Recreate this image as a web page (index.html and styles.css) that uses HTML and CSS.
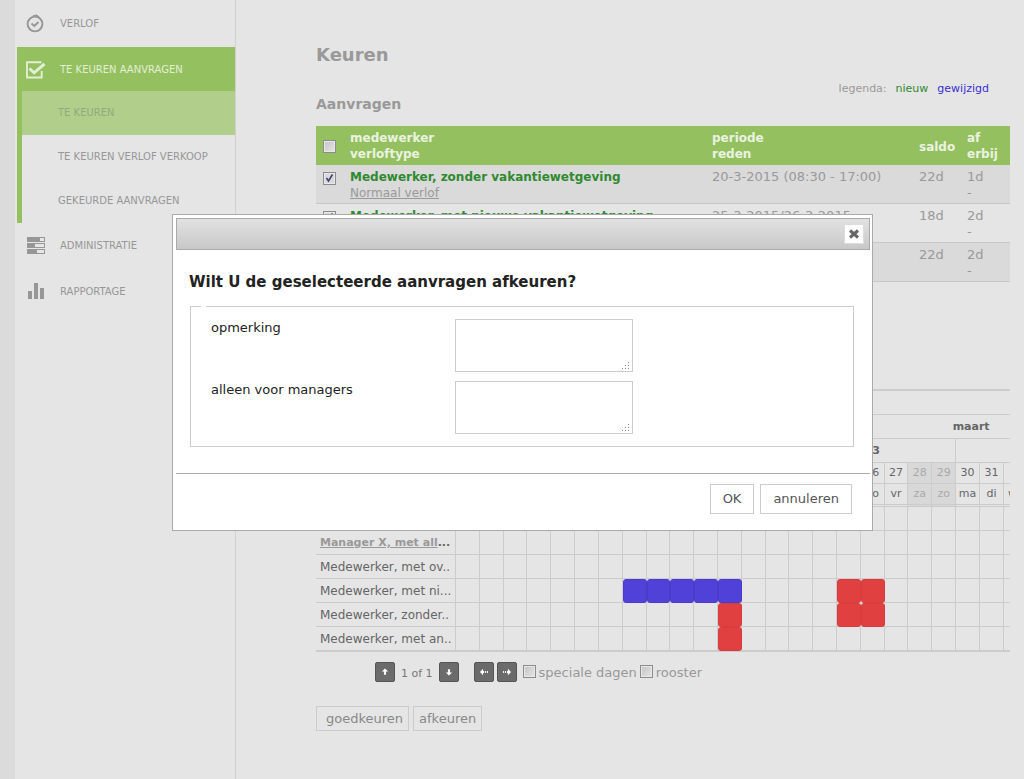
FILE: index.html
```html
<!DOCTYPE html>
<html lang="nl">
<head>
<meta charset="utf-8">
<title>Keuren</title>
<link rel="stylesheet" href="styles.css">
</head>
<body>
<div class="page">
  <nav class="sidebar">
    <a class="item" href="#">
      <svg class="icon" viewBox="0 0 20 20"><circle cx="9" cy="10" r="7.400" fill="none" stroke="currentColor" stroke-width="1.900"/><path d="M7 2.200l3.500-.700 2.500 2" fill="none" stroke="currentColor" stroke-width="2"/><path d="M5.500 9.500l2.800 2.500 4.200-4" fill="none" stroke="currentColor" stroke-width="2"/></svg>
      VERLOF</a>
    <div class="group">
      <a class="item active" href="#">
        <svg class="icon" viewBox="0 0 20 20"><path d="M15.500 2.200H1v15.300h14.700V11" fill="none" stroke="currentColor" stroke-width="1.900"/><path d="M3.500 8.500l4.500 4.300L18.500 4" fill="none" stroke="currentColor" stroke-width="3"/></svg>
        TE KEUREN AANVRAGEN</a>
      <a class="sub current" href="#">TE KEUREN</a>
      <a class="sub" href="#">TE KEUREN VERLOF VERKOOP</a>
      <a class="sub" href="#">GEKEURDE AANVRAGEN</a>
    </div>
    <a class="item" href="#">
      <svg class="icon" viewBox="0 0 20 20"><path d="M1 1h18v5H1zM1 7h18v5H1zM1 13h18v5H1z" fill="currentColor"/><path d="M14 2h4v3h-4zM9 8h9v3H9zM11 14h7v3h-7z" fill="#e5e5e5"/></svg>
      ADMINISTRATIE</a>
    <a class="item" href="#">
      <svg class="icon" viewBox="0 0 20 20"><path d="M2 9h4v8H2zM8 1h4v16H8zM14 6h4v11h-4z" fill="currentColor"/></svg>
      RAPPORTAGE</a>
  </nav>

  <main class="main">
    <h1>Keuren</h1>
    <p class="legend">legenda:<span class="new">nieuw</span><span class="changed">gewijzigd</span></p>
    <h2>Aanvragen</h2>
    <table class="requests">
      <colgroup><col class="c-check"><col><col class="c-period"><col class="c-saldo"><col class="c-off"></colgroup>
      <thead>
        <tr><th class="mid"><input type="checkbox" aria-label="alles"></th><th>medewerker<br>verloftype</th><th>periode<br>reden</th><th class="mid">saldo</th><th>af<br>erbij</th></tr>
      </thead>
      <tbody>
        <tr><td><input type="checkbox" checked aria-label="Medewerker, zonder vakantiewetgeving"></td><td><b>Medewerker, zonder vakantiewetgeving</b><br><a href="#">Normaal verlof</a></td><td>20-3-2015 (08:30 - 17:00)</td><td>22d</td><td>1d<br>-</td></tr>
        <tr><td><input type="checkbox" checked aria-label="Medewerker, met nieuwe vakantiewetgeving"></td><td><b>Medewerker, met nieuwe vakantiewetgeving</b></td><td>25-3-2015/26-3-2015</td><td>18d</td><td>2d<br>-</td></tr>
        <tr><td></td><td></td><td></td><td>22d</td><td>2d<br>-</td></tr>
      </tbody>
    </table>

    <table class="planner">
      <colgroup><col class="p-name"><col span="23"><col class="p-edge"></colgroup>
      <thead>
        <tr class="band"><td colspan="25"></td></tr>
        <tr class="band"><td colspan="21"></td><th colspan="4">maart</th></tr>
        <tr class="band week"><td></td><th colspan="7"></th><th colspan="7"></th><th colspan="7">13</th><td colspan="3"></td></tr>
        <tr class="day"><td></td><td></td><td></td><td></td><td></td><td></td><td class="off"></td><td class="off"></td><td></td><td></td><td></td><td></td><td></td><td class="off"></td><td class="off"></td><td></td><td></td><td></td><td>26</td><td>27</td><td class="off">28</td><td class="off">29</td><td>30</td><td>31</td><td></td></tr>
        <tr class="day last"><td></td><td></td><td></td><td></td><td></td><td></td><td class="off"></td><td class="off"></td><td></td><td></td><td></td><td></td><td></td><td class="off"></td><td class="off"></td><td></td><td></td><td></td><td>do</td><td>vr</td><td class="off">za</td><td class="off">zo</td><td>ma</td><td>di</td><td class="edge">wo</td></tr>
      </thead>
      <tbody>
        <tr><th></th><td></td><td></td><td></td><td></td><td></td><td></td><td></td><td></td><td></td><td></td><td></td><td></td><td></td><td></td><td></td><td></td><td></td><td></td><td></td><td></td><td></td><td></td><td></td><td></td></tr>
        <tr><th class="manager"><a href="#">Manager X, met all</a>...</th><td></td><td></td><td></td><td></td><td></td><td></td><td></td><td></td><td></td><td></td><td></td><td></td><td></td><td></td><td></td><td></td><td></td><td></td><td></td><td></td><td></td><td></td><td></td><td></td></tr>
        <tr><th>Medewerker, met ov..</th><td></td><td></td><td></td><td></td><td></td><td></td><td></td><td></td><td></td><td></td><td></td><td></td><td></td><td></td><td></td><td></td><td></td><td></td><td></td><td></td><td></td><td></td><td></td><td></td></tr>
        <tr><th>Medewerker, met ni...</th><td></td><td></td><td></td><td></td><td></td><td></td><td></td><td><i class="blue"></i></td><td><i class="blue"></i></td><td><i class="blue"></i></td><td><i class="blue"></i></td><td><i class="blue"></i></td><td></td><td></td><td></td><td></td><td><i class="red"></i></td><td><i class="red"></i></td><td></td><td></td><td></td><td></td><td></td><td></td></tr>
        <tr><th>Medewerker, zonder..</th><td></td><td></td><td></td><td></td><td></td><td></td><td></td><td></td><td></td><td></td><td></td><td><i class="red"></i></td><td></td><td></td><td></td><td></td><td><i class="red"></i></td><td><i class="red"></i></td><td></td><td></td><td></td><td></td><td></td><td></td></tr>
        <tr><th>Medewerker, met an..</th><td></td><td></td><td></td><td></td><td></td><td></td><td></td><td></td><td></td><td></td><td></td><td><i class="red"></i></td><td></td><td></td><td></td><td></td><td></td><td></td><td></td><td></td><td></td><td></td><td></td><td></td></tr>
      </tbody>
    </table>

    <div class="pager">
      <button class="nav" aria-label="omhoog"><svg viewBox="0 0 20 20"><path d="M10 6l3.500 3.500h-2.300V13H8.800V9.500H6.500z" fill="#fff"/></svg></button>
      <span class="count">1 of 1</span>
      <button class="nav down" aria-label="omlaag"><svg viewBox="0 0 20 20"><path d="M10 14l3.500-3.500h-2.300V7H8.800v3.500H6.500z" fill="#fff"/></svg></button>
      <button class="nav" aria-label="terug"><svg viewBox="0 0 20 20"><path d="M5.500 10L9 6.500V9h1v2H9v2.500zM11 9h1.200v2H11zM13.200 9h1.200v2h-1.200z" fill="#fff"/></svg></button>
      <button class="nav" aria-label="verder"><svg viewBox="0 0 20 20"><path d="M14.500 10L11 6.500V9h-1v2h1v2.500zM7.800 9H9v2H7.800zM5.600 9h1.200v2H5.600z" fill="#fff"/></svg></button>
      <label><input type="checkbox">speciale dagen</label>
      <label><input type="checkbox">rooster</label>
    </div>

    <div class="actions">
      <button class="btn wide">goedkeuren</button>
      <button class="btn">afkeuren</button>
    </div>
  </main>
</div>

<dialog class="dialog" open aria-labelledby="question">
  <div class="titlebar">
    <button class="close" aria-label="sluiten"><svg viewBox="0 0 18 18"><path d="M5 5.500l8 7M13 5.500l-8 7" stroke="#666" stroke-width="3" fill="none"/></svg></button>
  </div>
  <div class="content">
    <h3 id="question">Wilt U de geselecteerde aanvragen afkeuren?</h3>
    <fieldset>
      <legend></legend>
      <div class="field"><label for="remark">opmerking</label><div class="box"><textarea id="remark"></textarea><svg class="grip" viewBox="0 0 9 9"><path d="M7 0h1v1H7zM7 3h1v1H7zM7 6h1v1H7zM4 3h1v1H4zM4 6h1v1H4zM1 6h1v1H1z" fill="#888"/></svg></div></div>
      <div class="field"><label for="managers">alleen voor managers</label><div class="box"><textarea id="managers"></textarea><svg class="grip" viewBox="0 0 9 9"><path d="M7 0h1v1H7zM7 3h1v1H7zM7 6h1v1H7zM4 3h1v1H4zM4 6h1v1H4zM1 6h1v1H1z" fill="#888"/></svg></div></div>
    </fieldset>
  </div>
  <div class="buttons">
    <button class="dbtn">OK</button>
    <button class="dbtn">annuleren</button>
  </div>
</dialog>
</body>
</html>
```
FILE: styles.css
```css
* { box-sizing: border-box; }

body {
  margin: 0;
  background: #e5e5e5;
  color: #999;
  font: 13px/16px Verdana, "DejaVu Sans", sans-serif;
}

button, textarea { font: inherit; }

h1, h2, h3, p { margin: 0; }

.page {
  display: flex;
  min-height: 100vh;
  border-left: 15px solid #dbdbdb;
}

/* Sidebar */
.sidebar {
  flex: 0 0 221px;
  padding: 1px 0 0 2px;
  border-right: 1px solid #d0d0d0;
  font-size: 10px;
}

.sidebar a { color: #979797; text-decoration: none; }

.item {
  display: flex;
  align-items: center;
  gap: 14px;
  height: 46px;
  padding-left: 9px;
}

.icon { width: 20px; height: 20px; }

.group {
  display: flex;
  flex-direction: column;
  border-left: 5px solid #94c060;
}

.item.active {
  height: 44px;
  padding: 2px 0 0 4px;
  background: #94c060;
}

.sidebar .item.active { color: #e2efd4; }

.sub {
  display: flex;
  align-items: center;
  height: 44px;
  padding-left: 36px;
}

.sub.current { background: #b1cf8a; }
.sidebar .sub.current { color: #94aa7d; }

/* Main column */
.main {
  flex: 1;
  min-width: 0;
  padding: 43px 14px 0 80px;
}

h1 { font-size: 18px; line-height: 24px; }
h2 { font-size: 14px; line-height: 14px; margin-bottom: 15px; }

.legend {
  display: flex;
  justify-content: flex-end;
  gap: 9px;
  margin-top: 14px;
  padding-right: 21px;
  font-size: 11px;
}

.new { color: #2f8a2f; }
.changed { color: #3a2fd0; }

input[type="checkbox"] {
  appearance: none;
  flex: none;
  width: 13px;
  height: 13px;
  margin: 0;
  border: 1px solid #8c8c8c;
  background: linear-gradient(135deg, #c4c4c8, #e6e6e6);
  box-shadow: inset 0 0 0 1px #e8e8e8;
}

input[type="checkbox"]:checked {
  background: url("data:image/svg+xml,%3Csvg xmlns='http://www.w3.org/2000/svg' viewBox='0 0 11 11'%3E%3Cpath d='M2.500 5l2 3 4-6.500' fill='none' stroke='%23446' stroke-width='1.600'/%3E%3C/svg%3E") #d8d8e0;
}

.requests {
  width: 100%;
  table-layout: fixed;
  border-collapse: separate;
  border-spacing: 0;
}

.c-check { width: 33px; }
.c-period { width: 207px; }
.c-saldo { width: 48px; }
.c-off { width: 44px; }

.requests th, .requests td {
  height: 39px;
  padding: 4px 0 2px 1px;
  text-align: left;
  vertical-align: top;
}

.requests th { background: #94c060; color: #eaf3e0; font-size: 12px; }
.requests .mid { vertical-align: middle; }
.requests td { border-bottom: 1px solid #c8c8c8; }
.requests tbody tr:nth-child(odd) { background: #dadada; }
.requests th:first-child, .requests td:first-child { padding-left: 7px; }
.requests input { display: block; }
.requests td input { margin-top: 3px; }
.requests b { color: #2f8a2f; font-size: 12px; }
.requests a { color: #999; font-size: 12px; }

/* Planner */
.planner {
  width: 100%;
  margin-top: 107px;
  table-layout: fixed;
  border-collapse: separate;
  border-spacing: 0;
  border-top: 2px solid #ccc;
  border-bottom: 1px solid #ccc;
  color: #666;
}

.p-name { width: 140px; }
.p-edge { width: 6px; }

.planner td, .planner th {
  overflow: hidden;
  height: 24px;
  padding: 0;
  border-bottom: 1px solid #ccc;
  white-space: nowrap;
  text-align: center;
  font-weight: normal;
}

.planner .band th { font-weight: bold; font-size: 11px; }
.planner .week th, .day td, .planner tbody td:not(:last-child), .planner tbody th { border-right: 1px solid #ccc; }
.planner .day td { height: 21px; font-size: 11px; }
.planner .day.last td { height: 23px; border-bottom: 3px double #ccc; }
.day td:last-child { border-right: 0; }
.planner .off { background: #d8d8d8; color: #aaa; }
.planner .day .edge { padding-left: 4px; text-align: left; }

.planner tbody th {
  padding: 1px 0 0 4px;
  text-align: left;
  font-size: 12px;
}

.planner tbody .manager { font-weight: bold; font-size: 11px; }
.manager a { color: #999; }

.planner i {
  display: block;
  height: 24px;
  margin: 0 -1px -1px 0;
  border-radius: 3px;
}

.planner td:has(i) { overflow: visible; }

.blue { background: #5041d8; border: 1px solid #4a3bcd; }
.red { background: #e04040; border: 1px solid #d83c3c; }

/* Footer controls */
.pager {
  display: flex;
  align-items: center;
  gap: 3px;
  padding: 10px 0 0 59px;
}

.nav {
  width: 20px;
  height: 20px;
  padding: 0;
  border: 1px solid #555;
  border-radius: 2px;
  background: #6b6b6b;
}

.nav svg { display: block; width: 18px; height: 18px; }
.nav.down { margin-right: 12px; }
.count { padding: 4px 3px 0; color: #777; font-size: 11px; }
.pager label { display: flex; align-items: center; gap: 3px; padding-top: 2px; }
.pager label input { margin-bottom: 4px; }
.nav + label { margin-left: 3px; }

.actions { display: flex; gap: 4px; margin-top: 24px; }

.btn {
  height: 25px;
  padding: 0 5px;
  border: 1px solid #ccc;
  background: #e5e5e5;
  color: #888;
}

.btn.wide { padding-left: 9px; }

/* Dialog */
.dialog {
  position: absolute;
  top: 214px;
  left: 172px;
  width: 701px;
  margin: 0;
  padding: 3px 2px 16px 3px;
  border: 1px solid #aaa;
  background: #fff;
  color: #222;
}

.titlebar {
  display: flex;
  align-items: center;
  justify-content: flex-end;
  height: 32px;
  padding-right: 5px;
  border: 1px solid #aaa;
  background: linear-gradient(#e2e2e2, #c8c8c8);
}

.close {
  width: 20px;
  height: 20px;
  padding: 0;
  border: 1px solid #ddd;
  background: #fff;
}

.close svg { display: block; width: 18px; height: 18px; }

.content { padding: 22px 16px 26px 13px; }

h3 { font-size: 15px; line-height: 20px; }

fieldset {
  display: flex;
  flex-direction: column;
  gap: 9px;
  margin: 14px 0 0 1px;
  padding: 12px 20px;
  border: 1px solid #ccc;
}

legend { width: 5px; height: 1px; margin-left: -10px; padding: 0; }

.field { display: flex; }
.field label { flex: 0 0 244px; padding-top: 1px; }
.box { position: relative; width: 178px; }

textarea {
  display: block;
  width: 100%;
  height: 53px;
  border: 1px solid #ccc;
  background: #fff;
  resize: none;
}

.grip {
  position: absolute;
  right: 3px;
  bottom: 1px;
  width: 9px;
  height: 9px;
}

.buttons {
  display: flex;
  justify-content: flex-end;
  gap: 6px;
  padding: 10px 18px 0 0;
  border-top: 1px solid #aaa;
}

.dbtn {
  height: 30px;
  padding: 0 12px;
  border: 1px solid #ccc;
  background: #fff;
  color: #555;
}
```
